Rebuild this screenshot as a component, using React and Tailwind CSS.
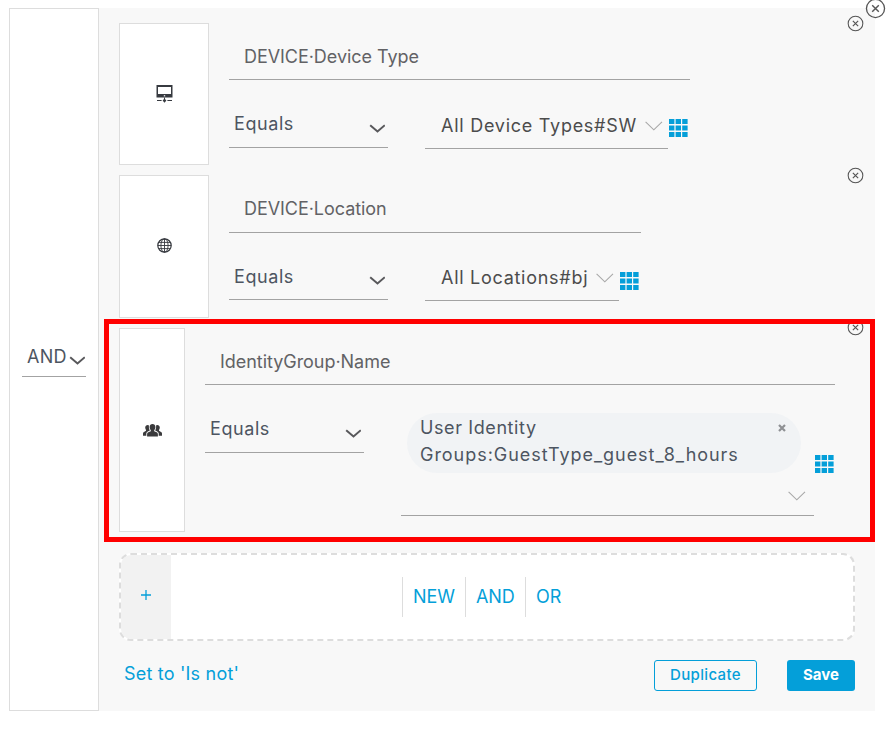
const SANS = 'font-[Inter,"Liberation_Sans",sans-serif]';

function ChevronDark({ className = "" }) {
  return (
    <svg width="16" height="9" viewBox="0 0 16 9" fill="none" className={`shrink-0 ${className}`}>
      <path d="M1.2 1.2 L8.5 7.4 L15.8 1.2" stroke="#58585b" strokeWidth="2" />
    </svg>
  );
}

function ChevronLight({ className = "" }) {
  return (
    <svg width="18" height="10" viewBox="0 0 18 10" fill="none" className={`shrink-0 ${className}`}>
      <path d="M0.6 0.8 L8.8 8.8 L17 0.8" stroke="#a8a8a8" strokeWidth="1.1" />
    </svg>
  );
}

function GridIcon({ className = "" }) {
  return (
    <svg width="19" height="18" viewBox="0 0 19 18" fill="#049fd9" className={`shrink-0 ${className}`}>
      {[0, 6.5, 13].map((y) =>
        [0, 6.6, 13.2].map((x) => <rect key={`${x}-${y}`} x={x} y={y} width="5.4" height="5" />)
      )}
    </svg>
  );
}

function CloseIcon({ size, className = "" }) {
  return (
    <svg width={size} height={size} viewBox="0 0 16 16" fill="none" stroke="#555" className={className}>
      <circle cx="8" cy="8" r="6.9" strokeWidth="1" />
      <path d="M5.5 5.5 L10.5 10.5 M10.5 5.5 L5.5 10.5" strokeWidth="1.1" />
    </svg>
  );
}

function MonitorIcon() {
  return (
    <svg width="17" height="18" viewBox="0 0 17 18">
      <path fill="#373a40" fillRule="evenodd" d="M0.5 0H16.5V12.5H0.5Z M2 2V9H15V2Z" />
      <path fill="#fff" d="M7.8 10.2H9.2V11.4H7.8Z" />
      <path fill="#373a40" d="M8 12.5H9V14H8Z M1 14.9H5.6V16H1Z M11.4 14.9H16V16H11.4Z M8.5 13.6L10.4 15.6L8.5 17.8L6.6 15.6Z" />
    </svg>
  );
}

function GlobeIcon() {
  return (
    <svg width="15" height="15" viewBox="0 0 15 15" fill="none" stroke="#34373d" strokeWidth="0.9" className="mb-[3px]">
      <circle cx="7.5" cy="7.5" r="6.7" strokeWidth="1.2" />
      <ellipse cx="7.5" cy="7.5" rx="3.6" ry="6.7" />
      <path d="M7.5 0.8V14.2 M0.8 7.5H14.2 M2 4.4H13 M2 10.6H13" />
    </svg>
  );
}

function GroupIcon() {
  return (
    <svg width="19" height="13" viewBox="0 0 19 13" fill="#3a3a3c">
      <path d="M9.5 0C11.2 0 12.4 1.2 12.4 3C12.4 4.4 11.9 5.5 11.2 6.2V7.2L13.6 8.2C14.5 8.6 14.9 9.3 14.9 10.3V12.6H4.1V10.3C4.1 9.3 4.5 8.6 5.4 8.2L7.8 7.2V6.2C7.1 5.5 6.6 4.4 6.6 3C6.6 1.2 7.8 0 9.5 0Z" />
      <path d="M4.7 1.1C5.3 1.1 5.7 1.3 6 1.6C5.7 3.4 6 5.2 6.8 6.5L4.8 7.5C3.8 8 3.3 8.8 3.3 9.8V11.8H0V9.4C0 8.7 0.4 8.2 1 7.9L3 6.8V6C2.5 5.4 2.2 4.6 2.2 3.6C2.2 2 3.3 1.1 4.7 1.1Z" />
      <path d="M14.3 1.1C13.7 1.1 13.3 1.3 13 1.6C13.3 3.4 13 5.2 12.2 6.5L14.2 7.5C15.2 8 15.7 8.8 15.7 9.8V11.8H19V9.4C19 8.7 18.6 8.2 18 7.9L16 6.8V6C16.5 5.4 16.8 4.6 16.8 3.6C16.8 2 15.7 1.1 14.3 1.1Z" />
    </svg>
  );
}

function IconBox({ className, children }) {
  return (
    <div className={`flex shrink-0 items-center justify-center border border-[#ddd] bg-white ${className}`}>
      {children}
    </div>
  );
}

function Operator({ height = "h-[68px]", chevron = "mt-[12px]" }) {
  return (
    <div className={`flex w-[159px] shrink-0 justify-between border-b border-[#a3a3a3] pl-[5px] pr-[3px] pt-8 text-[#4d5561] ${height}`}>
      <span className="tracking-[0.58px]">Equals</span>
      <ChevronDark className={chevron} />
    </div>
  );
}

function Rule({ icon, attribute, value, headSize, operatorHeight, chevron, valueSize, gridOffset, tracking, className }) {
  return (
    <div className={`flex ${className}`}>
      <IconBox className="w-[90px]">{icon}</IconBox>
      <div className="ml-5">
        <div className={`border-b border-[#a3a3a3] pl-[15px] pt-[22px] text-[#626265] ${headSize}`}>
          <span className="tracking-[-0.05px]">{attribute}</span>
        </div>
        <div className="flex items-start">
          <Operator height={operatorHeight} chevron={chevron} />
          <div className={`ml-[37px] flex justify-between border-b border-[#a3a3a3] pl-4 pr-[5px] text-[#4c4c4c] ${valueSize}`}>
            <span className={`whitespace-nowrap ${tracking}`}>{value}</span>
            <ChevronLight className="mt-[7px]" />
          </div>
          <GridIcon className={gridOffset} />
        </div>
      </div>
    </div>
  );
}

export default function App() {
  return (
    <div className={`h-[729px] w-[888px] overflow-hidden bg-white pl-[9px] pt-2 text-[18px] font-normal leading-6 ${SANS}`}>
      <div className="relative flex h-[703px] w-[866px]">
        <div className="w-[90px] shrink-0 border border-[#ddd] bg-white pl-3 pt-[336px]">
          <div className="flex h-[32px] w-[64px] justify-between border-b border-[#a3a3a3] pl-[5px] text-[#4d5561]">
            <span className="tracking-[0.3px]">AND</span>
            <ChevronDark className="-ml-1 mr-px mt-[11px]" />
          </div>
        </div>

        <div className="w-[776px] bg-[#f8f8f8] pl-5 pt-[15px]">
          <Rule
            icon={<MonitorIcon />}
            attribute="DEVICE·Device Type"
            value="All Device Types#SW"
            headSize="h-[57px] w-[461px]"
            operatorHeight="h-[68px]"
            chevron="mt-[12px]"
            valueSize="h-[69px] w-[243px] pt-[34px]"
            gridOffset="ml-px mt-[39px]"
            tracking="tracking-[0.74px]"
            className="h-[142px]"
          />
          <Rule
            icon={<GlobeIcon />}
            attribute="DEVICE·Location"
            value="All Locations#bj"
            headSize="h-[58px] w-[412px]"
            operatorHeight="h-[67px]"
            chevron="mt-[11px]"
            valueSize="h-[68px] w-[194px] pt-[33px]"
            gridOffset="ml-px mt-[39px]"
            tracking="tracking-[0.72px]"
            className="mt-[10px] h-[143px]"
          />

          <div className="mt-[10px] flex h-[204px]">
            <IconBox className="w-[66px]"><GroupIcon /></IconBox>
            <div className="ml-5">
              <div className="h-[57px] w-[630px] border-b border-[#a3a3a3] pl-[15px] pt-[22px] text-[#626265]">
                <span className="tracking-[-0.04px]">IdentityGroup·Name</span>
              </div>
              <div className="flex items-start">
                <Operator />
                <div className="ml-[37px] h-[131px] w-[413px] border-b border-[#a3a3a3] pl-[6px] pt-[28px]">
                  <div className="flex h-[60px] w-[394px] justify-between rounded-[30px] bg-[#f1f3f5] pl-[13px] pr-[15px] pt-px leading-[27px] text-[#4d5561]">
                    <span className="whitespace-nowrap tracking-[0.96px]">
                      <span className="tracking-[0.6px]">User Identity</span>
                      <br />
                      Groups:GuestType_guest_8_hours
                    </span>
                    <svg width="8" height="8" viewBox="0 0 8 8" className="mt-[10px]">
                      <path d="M1 1L7 7M7 1L1 7" stroke="#8f9194" strokeWidth="2.2" />
                    </svg>
                  </div>
                  <ChevronLight className="ml-[381px] mt-[18px]" />
                </div>
                <GridIcon className="ml-px mt-[70px]" />
              </div>
            </div>
          </div>

          <div className="mt-[21px] flex h-[88px] w-[736px] overflow-hidden rounded-[12px] border-2 border-dashed border-[#ddd] bg-white text-[#049fd9]">
            <div className="flex w-[50px] shrink-0 items-center justify-center bg-[#f2f2f2]">
              <svg width="10" height="10" viewBox="0 0 10 10" className="mb-[4px]">
                <path d="M5 0V10M0 5H10" stroke="#049fd9" strokeWidth="1.3" />
              </svg>
            </div>
            <div className="ml-[231px] mt-[22px] flex h-10 leading-10">
              <span className="w-[63px] border-l border-[#ddd] pl-[10px] tracking-[-0.1px]">NEW</span>
              <span className="w-[60px] border-l border-[#ddd] pl-[10px] tracking-[-0.1px]">AND</span>
              <span className="border-l border-[#ddd] pl-[10px]">OR</span>
            </div>
          </div>

          <div className="mt-[19px] flex h-[31px] w-[736px] pl-[5px]">
            <span className="mt-[2px] tracking-[0.2px] text-[#049fd9]">Set to 'Is not'</span>
            <button className="ml-auto h-[31px] w-[103px] rounded-[3px] border border-[#049fd9] bg-[#f8f8f8] pb-px text-[15px] font-medium tracking-[0.35px] text-[#049fd9]">
              Duplicate
            </button>
            <button className="ml-[30px] h-[31px] w-[68px] rounded-[3px] bg-[#049fd9] pb-px text-[15px] font-bold text-white">
              Save
            </button>
          </div>
        </div>

        <CloseIcon size={17} className="absolute left-[838px] top-[7px]" />
        <CloseIcon size={17} className="absolute left-[838px] top-[159px]" />
        <CloseIcon size={17} className="absolute left-[838px] top-[311px]" />
        <CloseIcon size={21} className="absolute left-[856px] top-[-10px]" />
        <div className="absolute left-[95px] top-[311px] h-[223px] w-[771px] border-5 border-[#ff0000]" />
      </div>
    </div>
  );
}
